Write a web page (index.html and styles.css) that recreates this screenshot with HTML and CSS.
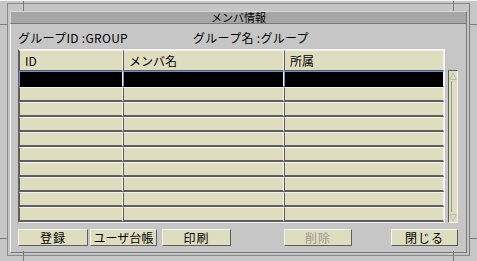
FILE: index.html
```html
<!DOCTYPE html>
<html lang="ja">
<head>
  <meta charset="UTF-8" />
  <title>メンバ情報</title>
  <link rel="stylesheet" href="styles.css">
</head>
<body>
  <div class="frame">
    <!-- resize handle marks of the window frame -->
    <span class="tick tick-v" style="left:23px;top:0"></span>
    <span class="tick tick-v" style="left:453px;top:0"></span>
    <span class="tick tick-v" style="left:23px;bottom:0"></span>
    <span class="tick tick-v" style="left:453px;bottom:0"></span>
    <span class="tick tick-h" style="left:0;top:23px"></span>
    <span class="tick tick-h" style="right:0;top:23px"></span>
    <span class="tick tick-h" style="left:0;top:237px"></span>
    <span class="tick tick-h" style="right:0;top:237px"></span>

    <div class="titlebar">メンバ情報</div>

    <div class="panel">
      <div class="info">
        <span class="info-id">グループID :GROUP</span>
        <span class="info-name">グループ名 :グループ</span>
      </div>

      <div class="list">
        <table class="grid">
          <thead>
            <tr><th class="c-id">ID</th><th class="c-name">メンバ名</th><th class="c-dept">所属</th></tr>
          </thead>
          <tbody>
            <tr class="selected"><td></td><td></td><td></td></tr>
            <tr><td></td><td></td><td></td></tr>
            <tr><td></td><td></td><td></td></tr>
            <tr><td></td><td></td><td></td></tr>
            <tr><td></td><td></td><td></td></tr>
            <tr><td></td><td></td><td></td></tr>
            <tr><td></td><td></td><td></td></tr>
            <tr><td></td><td></td><td></td></tr>
            <tr><td></td><td></td><td></td></tr>
            <tr><td></td><td></td><td></td></tr>
          </tbody>
        </table>
        <div class="scrollbar">
          <div class="arrow">&#9651;</div>
          <div class="track"></div>
          <div class="arrow">&#9661;</div>
        </div>
      </div>

      <div class="buttons">
        <button class="btn b-reg">登録</button>
        <button class="btn b-user">ユーザ台帳</button>
        <button class="btn b-print">印刷</button>
        <button class="btn b-del" disabled>削除</button>
        <button class="btn b-close">閉じる</button>
      </div>
    </div>
  </div>
</body>
</html>
```

FILE: styles.css
```css
:root {
  --bg: #c6c6c6;
  --title: #a6a6a6;
  --beige: #dfddbf;
  --dark: #5e5e5e;
  --light: #f4f4f4;
}
* { box-sizing: border-box; margin: 0; padding: 0; }
body {
  width: 477px;
  height: 261px;
  overflow: hidden;
  background: var(--bg);
  font-family: "Noto Sans CJK JP", "DejaVu Sans", sans-serif;
  font-size: 12px;
  color: #000;
}
.frame {
  position: relative;
  width: 477px;
  height: 261px;
  padding: 10px 10px 8px 10px;
  display: flex;
  flex-direction: column;
  border-top: 1px solid var(--light);
}
.frame::before {
  content: "";
  position: absolute;
  left: 7px; top: 2px; right: 7px; bottom: 5px;
  border: 1px solid #8a8a8a;
  border-right-color: #7a7a7a;
  pointer-events: none;
}
.tick { position: absolute; background: #7c7c7c; }
.tick-v { width: 1px; height: 10px; }
.tick-h { width: 8px; height: 1px; }

.titlebar {
  height: 13px;
  background: var(--title);
  border-top: 1px solid #d8d8d8;
  border-left: 1px solid #d8d8d8;
  border-bottom: 1px solid #777;
  border-right: 1px solid #777;
  text-align: center;
  line-height: 11px;
  font-size: 11px;
}
.panel {
  flex: 1;
  border-left: 1px solid var(--light);
  border-bottom: 1px solid #777;
  border-right: 1px solid #777;
  padding: 0 7px;
  display: flex;
  flex-direction: column;
}
.info {
  height: 25px;
  display: flex;
  align-items: center;
  padding-top: 2px;
  letter-spacing: 0.3px;
}
.info-id { width: 175px; }

.list { display: flex; align-items: flex-start; }
.grid {
  border-collapse: separate;
  border-spacing: 0;
  table-layout: fixed;
  width: 427px;
  border-top: 1px solid var(--light);
  border-left: 1px solid var(--dark);
  border-right: 1px solid var(--light);
  border-bottom: 1px solid var(--light);
}
.grid th, .grid td {
  background: var(--beige);
  border-top: 1px solid var(--light);
  border-bottom: 2px solid var(--dark);
  border-right: 1px solid var(--light);
  border-left: 1px solid var(--dark);
  padding: 0;
}
.grid th {
  height: 21px;
  font-weight: normal;
  text-align: left;
  padding-left: 5px;
  vertical-align: middle;
  border-bottom: 1px solid var(--dark);
}
.grid td { height: 15px; }
.c-id { width: 104px; }
.c-name { width: 161px; }
.grid tr.selected td {
  background: #000;
  height: 16px;
  border-top: 1px solid #6f8fd0;
  border-left: 1px solid #6f8fd0;
  border-bottom: 1px solid #000;
}
.scrollbar {
  margin-top: 21px;
  margin-left: 3px;
  width: 10px;
  height: 153px;
  display: flex;
  flex-direction: column;
  background: var(--beige);
  border-left: 1px solid var(--dark);
  border-top: 1px solid var(--dark);
  border-right: 1px solid var(--light);
  border-bottom: 1px solid var(--light);
}
.arrow {
  height: 10px;
  font-size: 7px;
  line-height: 10px;
  text-align: center;
  color: #555;
}
.track { flex: 1; border-left: 1px solid #999; margin-left: 2px; }

.buttons {
  margin-top: 6px;
  display: flex;
  height: 17px;
}
.btn {
  font-family: inherit;
  font-size: 12px;
  line-height: 13px;
  height: 17px;
  background: var(--beige);
  border-top: 1px solid var(--light);
  border-left: 1px solid var(--light);
  border-bottom: 1px solid var(--dark);
  border-right: 1px solid var(--dark);
  color: #000;
  letter-spacing: 1px;
}
.b-reg { width: 70px; }
.b-user { width: 67px; margin-left: 2px; letter-spacing: 0; }
.b-print { width: 69px; margin-left: 5px; }
.b-del { width: 68px; margin-left: 53px; color: #9a9a90; }
.b-close { width: 67px; margin-left: 39px; }
```
